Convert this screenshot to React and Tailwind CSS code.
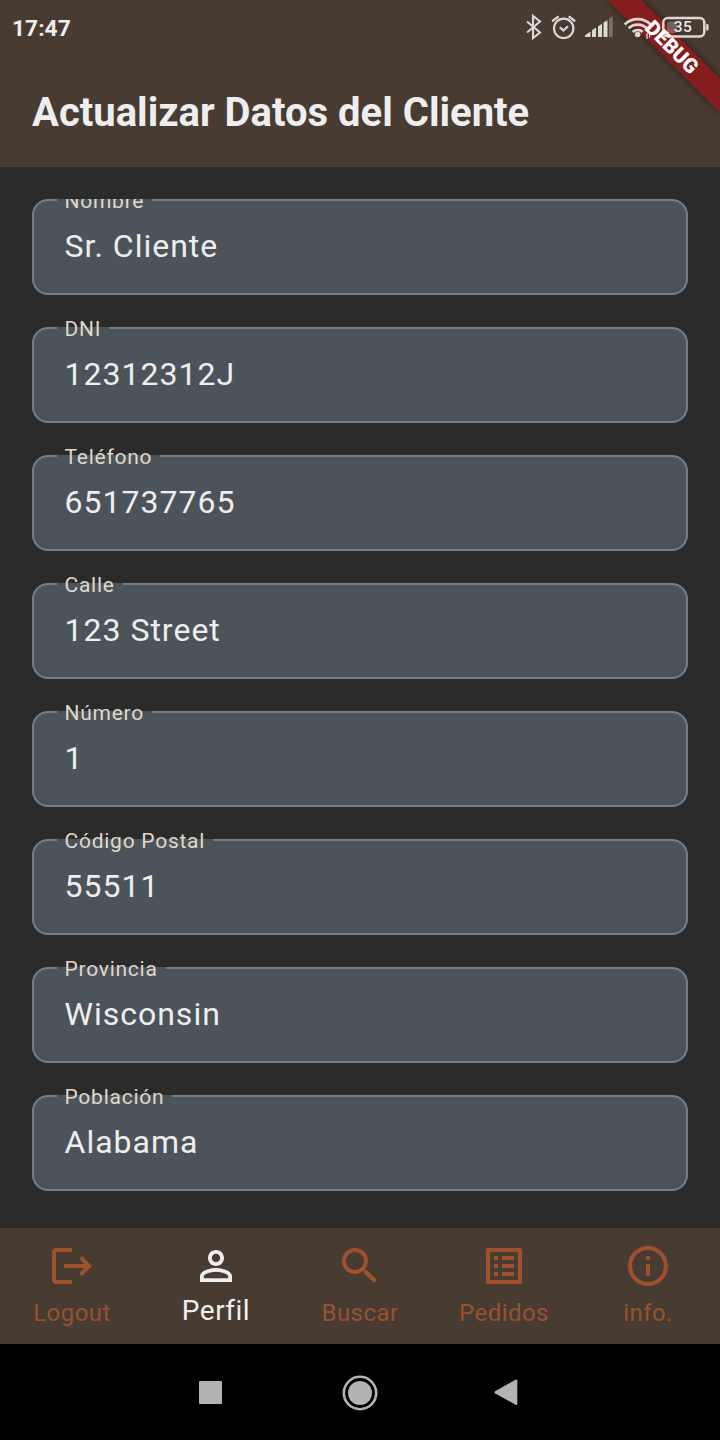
import React from "react";
import { MdSearch, MdListAlt, MdInfoOutline } from "react-icons/md";

const fields = [
  { label: "Nombre", value: "Sr. Cliente", clipped: true },
  { label: "DNI", value: "12312312J" },
  { label: "Teléfono", value: "651737765" },
  { label: "Calle", value: "123 Street" },
  { label: "Número", value: "1" },
  { label: "Código Postal", value: "55511" },
  { label: "Provincia", value: "Wisconsin" },
  { label: "Población", value: "Alabama" },
];

function LogoutIcon() {
  return (
    <svg viewBox="0 0 24 24" className="size-12" fill="currentColor">
      <path d="M17 7l-1.41 1.41L18.17 11H8v2h10.17l-2.58 2.58L17 17l5-5zM4 5h8V3H4c-1.1 0-2 .9-2 2v14c0 1.1.9 2 2 2h8v-2H4V5z" />
    </svg>
  );
}

function PersonIcon() {
  return (
    <svg viewBox="0 0 24 24" className="size-12" fill="currentColor">
      <path d="M12 5.9c1.16 0 2.1.94 2.1 2.1s-.94 2.1-2.1 2.1S9.9 9.16 9.9 8s.94-2.1 2.1-2.1m0 9c2.97 0 6.1 1.46 6.1 2.1v1.1H5.9V17c0-.64 3.13-2.1 6.1-2.1M12 4C9.79 4 8 5.79 8 8s1.79 4 4 4 4-1.79 4-4-1.79-4-4-4zm0 9c-2.67 0-8 1.34-8 4v3h16v-3c0-2.66-5.33-4-8-4z" />
    </svg>
  );
}

const tabs = [
  { label: "Logout", icon: <LogoutIcon /> },
  { label: "Perfil", icon: <PersonIcon />, active: true },
  { label: "Buscar", icon: <MdSearch className="size-12" /> },
  { label: "Pedidos", icon: <MdListAlt className="size-12" /> },
  { label: "info.", icon: <MdInfoOutline className="size-12" /> },
];

function StatusIcons() {
  return (
    <svg viewBox="520 0 200 56" className="relative z-20 h-14 w-[200px]" fill="none" stroke="#dcd8d4">
      <path d="M527 21.5 540 32.500 533 38V16L540 21.500 527 32.500" strokeWidth="2.100" />
      <circle cx="563.7" cy="28.300" r="9.700" strokeWidth="2.200" />
      <path d="M552.200 21.200 558.700 16.400M575.200 21.200 568.700 16.400" strokeWidth="2.300" />
      <path d="M559.800 27.200 563.400 30.600 568 26.300" strokeWidth="2.200" />
      <g stroke="none" fill="#dcd8d4">
        <path d="M585 37v-1.800l5.500-3.700V37zM592 37v-6.700l4-2.700V37zM598 37V26.500l4-2.700V37zM603.500 37V22.500l4-2.200V37z" />
        <path d="M609 37V18.500l3.800-2.200V37z" opacity=".35" />
        <circle cx="637.700" cy="34.500" r="2.800" />
        <path d="M645.500 35l2.200-2.500V39h-1.300v-4.500zM649 32.500h1.300v4l-1.300 2z" />
      </g>
      <path d="M624.700 24.500a18.500 18.500 0 0 1 26 0M628.700 28.300a13 13 0 0 1 18 0M632.700 31.900a7.500 7.500 0 0 1 10 0" strokeWidth="2.700" />
      <rect x="663.300" y="18" width="41" height="18.500" rx="4.500" strokeWidth="2.500" />
      <rect x="667" y="21.500" width="10" height="11.500" rx="2" fill="#dcd8d4" stroke="none" opacity=".3" />
      <path d="M707.300 24.200v6.200" strokeWidth="2.400" />
      <text x="683" y="32.300" textAnchor="middle" fontFamily="Roboto" fontSize="15.500" fontWeight="500" fill="#eeeae6" stroke="none" letterSpacing=".4">35</text>
    </svg>
  );
}

function DebugBanner() {
  return (
    <>
      <svg viewBox="0 0 160 160" className="absolute top-0 right-0 z-10 size-40">
        <defs>
          <filter id="soft" x="-20%" y="-20%" width="140%" height="140%">
            <feGaussianBlur stdDeviation="5" />
          </filter>
        </defs>
        <path d="M47.500 0H81.500L160 78.500V112.500z" fill="#000" opacity=".5" filter="url(#soft)" />
        <path d="M47.500 0H81.500L160 78.500V112.500z" fill="#851d1d" />
      </svg>
      <svg viewBox="0 0 160 160" className="absolute top-0 right-0 z-30 size-40">
        <text x="112" y="47" transform="rotate(45 112 47)" dy="7.200" textAnchor="middle" fontFamily="Roboto" fontWeight="900" fontSize="20.400" fill="#fff">DEBUG</text>
      </svg>
    </>
  );
}

function Field({ label, value, clipped }) {
  return (
    <div className="relative flex h-24 shrink-0 items-center rounded-2xl border-2 border-[#767e84] bg-[#4c545b] px-[30.5px] pb-0.5 text-[32px] leading-none tracking-[1px] text-[#eeeeee]">
      <div className={clipped ? "absolute -top-0.5 left-[23px] h-6 overflow-hidden" : "absolute -top-3.5 left-[23px] h-9"}>
        <div className={clipped ? "h-0.5 bg-[#4c545b]" : "mt-3 h-0.5 bg-[#4c545b]"} />
        <div className="-mt-3 pr-2 pl-[7.5px] text-[21px] leading-6 tracking-[0.75px] text-[#e0d8c8]">{label}</div>
      </div>
      <span>{value}</span>
    </div>
  );
}

export default function App() {
  return (
    <div className="relative flex h-[1440px] w-[720px] flex-col overflow-hidden bg-[#2b2b2b] font-['Roboto',sans-serif]">
      <header className="h-[167px] shrink-0 bg-[#483b32] text-[#eeeeee]">
        <div className="flex h-14 items-center justify-between pl-3">
          <span className="pt-0.5 text-[22.8px] font-bold">17:47</span>
          <StatusIcons />
        </div>
        <h1 className="flex h-28 items-center px-8 pt-0.5 text-[40px] font-bold whitespace-nowrap">Actualizar Datos del Cliente</h1>
      </header>
      <DebugBanner />
      <main className="flex flex-1 flex-col gap-8 px-8 pt-8">
        {fields.map((f) => (
          <Field key={f.label} {...f} />
        ))}
      </main>
      <nav className="grid h-[116px] shrink-0 grid-cols-5 bg-[#483b32]">
        {tabs.map((t) => (
          <div key={t.label} className={t.active ? "flex flex-col items-center pt-3.5 text-[#eeeeee]" : "flex flex-col items-center pt-3.5 text-[#a0522d]"}>
            {t.icon}
            <span className={t.active ? "mt-[5px] text-[28px] leading-8 tracking-[0.5px]" : "mt-[9px] text-2xl leading-7 tracking-[0.45px] text-[#98522f]"}>{t.label}</span>
          </div>
        ))}
      </nav>
      <footer className="flex h-24 shrink-0 items-center bg-black pt-px pl-[199px] text-[#b3b3b3]">
        <div className="size-[23px] rounded-[1px] bg-[#b3b3b3]" />
        <svg viewBox="0 0 36 36" className="ml-[119.5px] size-9" fill="none" stroke="currentColor">
          <circle cx="18" cy="18" r="16.200" strokeWidth="2.600" />
          <circle cx="18" cy="18" r="12" fill="currentColor" stroke="none" />
        </svg>
        <svg viewBox="0 0 24 27" className="ml-[116.5px] h-[27px] w-6" fill="currentColor">
          <path d="M1 12.300 21.500.700Q23.300 0 23.300 1.600V25Q23.300 26.600 21.500 25.800L1 14.200Q-.2 13.200 1 12.300z" />
        </svg>
      </footer>
    </div>
  );
}
